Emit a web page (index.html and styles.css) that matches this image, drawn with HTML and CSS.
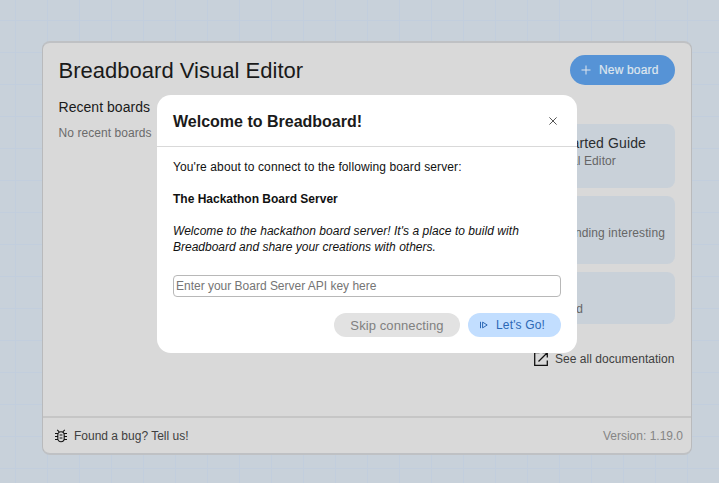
FILE: index.html
```html
<!DOCTYPE html>
<html lang="en">
<head>
<meta charset="utf-8">
<title>Breadboard Visual Editor</title>
<link rel="stylesheet" href="styles.css">
</head>
<body>
<main class="panel">
  <header class="top">
    <h1>Breadboard Visual Editor</h1>
    <button class="new"><svg width="10" height="10" viewBox="0 0 10 10"><path d="M5 .5v9M.5 5h9"/></svg><span>New board</span></button>
  </header>
  <div class="content">
    <section class="recent">
      <h2>Recent boards</h2>
      <p>No recent boards</p>
    </section>
    <section class="docs">
      <article class="card first"><h3>Getting Started Guide</h3><p>Visual Editor</p></article>
      <article class="card second"><p>finding interesting</p></article>
      <article class="card third"><p>board</p></article>
      <a class="all"><svg width="14" height="14" viewBox="0 0 14 14"><path d="M5.5 .7H.7v12.6h12.6V8.5M8.5 .7h4.8v4.8M13 1L4.5 9.5"/></svg><span>See all documentation</span></a>
    </section>
  </div>
  <footer class="foot">
    <a class="bug"><svg width="12" height="14" viewBox="0 0 12 14"><path d="M2.2 .8l2 2M9.8 .8l-2 2M0 4.5h3M9 4.5h3M0 7.5h3M9 7.5h3M0 10.5h3M9 10.5h3M4.6 6h2.8M4.6 9h2.8"/><rect x="2.8" y="2.7" width="6.4" height="10" rx="3.2"/></svg><span>Found a bug? Tell us!</span></a>
    <span class="version">Version: 1.19.0</span>
  </footer>
</main>
<div class="modal" role="dialog">
  <header class="modal-head">
    <h2>Welcome to Breadboard!</h2>
    <svg width="8" height="8" viewBox="0 0 8 8"><path d="M.4 .4l7.2 7.2M7.6 .4L.4 7.6"/></svg>
  </header>
  <div class="modal-body">
    <p class="intro">You're about to connect to the following board server:</p>
    <p class="name">The Hackathon Board Server</p>
    <p class="desc"><span class="l1">Welcome to the hackathon board server! It's a place to build with</span><br><span class="l2">Breadboard and share your creations with others.</span></p>
    <input type="text" placeholder="Enter your Board Server API key here">
    <div class="actions">
      <button class="skip"><span>Skip connecting</span></button>
      <button class="go"><svg width="8" height="8" viewBox="0 0 8 8"><path d="M.5 .8v6.4M2.6 1.1v5.8L7.2 4z"/></svg><span>Let's Go!</span></button>
    </div>
  </div>
</div>
</body>
</html>
```
FILE: styles.css
```css
* { box-sizing: border-box; }
body {
  margin: 0;
  height: 483px;
  overflow: hidden;
  padding: 41px 27px 0 42px;
  font: 12px/16px "Liberation Sans", Arial, sans-serif;
  background:
    linear-gradient(to right, #c2cedd 1px, transparent 1px) 15px 0 / 32px 32px,
    linear-gradient(#c2cedd 1px, transparent 1px) 0 20px / 32px 32px,
    #c8d1da;
}
h1, h2, h3, p { margin: 0; font-weight: 400; }
button { border: 0; padding: 0; font: inherit; display: flex; align-items: center; }
svg { display: block; flex: none; fill: none; stroke: currentColor; }
span { white-space: nowrap; }
.panel {
  width: 650px;
  height: 414px;
  border: 1px solid #b9babc;
  border-top: 2px solid #bfc1c4;
  border-bottom: 2px solid #bfc1c4;
  border-radius: 8px;
  background: #d9d9d9;
  display: flex;
  flex-direction: column;
}
.top { display: flex; justify-content: space-between; padding: 11.5px 16px 0 15.5px; height: 52px; }
h1 { font-size: 22px; line-height: 31px; color: #1a1a1a; letter-spacing: .02px; }
.new {
  width: 105px; height: 30px; border-radius: 15px;
  background: #5693d6; color: #dfe6ee; padding-left: 11px; gap: 8px;
}
.new span { letter-spacing: .16px; -webkit-text-stroke: .2px; }
.content { flex: 1; display: flex; justify-content: space-between; padding: 0 16px 0 15.5px; }
.recent h2 { font-size: 14px; line-height: 24px; color: #1a1a1a; letter-spacing: .04px; }
.recent p { margin-top: 6px; color: #6b6b6b; letter-spacing: .07px; }
.docs { width: 210px; padding-top: 29.4px; display: flex; flex-direction: column; gap: 8px; }
.card { background: #c9d1d9; border-radius: 8px; text-align: right; color: #666; letter-spacing: .12px; }
.first { height: 64px; padding: 10px 29px 0 0; }
.first h3 { font-size: 14px; line-height: 18px; color: #2a2d30; }
.first p { padding: 1px 30px 0 0; }
.second { height: 68px; padding: 28.6px 10px 0 0; }
.third { height: 52px; padding: 28.6px 92px 0 0; }
.all { display: flex; align-items: center; justify-content: flex-end; gap: 7px; margin: 18.6px .5px 0 0; color: #404040; letter-spacing: .04px; }
.all svg { color: #111; stroke-width: 1.3; }
.foot {
  height: 37px; border-top: 2px solid #c6c6c6;
  display: flex; align-items: center; justify-content: space-between; padding: 1px 8px 0 12px;
}
.bug { display: flex; align-items: center; gap: 7px; color: #404040; }
.bug svg { color: #111; stroke-width: 1.1; }
.version { color: #858585; }
.modal {
  position: absolute; left: 157px; top: 95px; width: 420px; height: 258px;
  border-radius: 14px; background: #fff; color: #111;
}
.modal-head {
  height: 52px; border-bottom: 1px solid #d9d9d9;
  display: flex; align-items: center; justify-content: space-between; padding: 2px 20px 0 16px;
}
.modal-head h2 { font-size: 16px; font-weight: 700; color: #1a1a1a; }
.modal-head svg { color: #555; margin-bottom: 2px; }
.modal-body { padding: 12px 16px 0; }
.intro { letter-spacing: .11px; }
.name { font-weight: 700; margin: 16px 0; }
.desc { font-style: italic; }
.l1 { letter-spacing: .045px; }
input {
  display: block; width: 388px; height: 22px; margin: 20px 0 16px; padding: 0 2px;
  border: 1px solid #b8b8b8; border-radius: 4px; font: inherit; letter-spacing: -.01px;
}
input::placeholder { color: #757575; opacity: 1; }
.actions { display: flex; justify-content: flex-end; gap: 8px; }
.skip { width: 126px; height: 24px; border-radius: 12px; background: #e2e2e2; color: #808080; justify-content: center; font-size: 13px; letter-spacing: .1px; padding-top: 1px; }
.go { width: 93px; height: 24px; border-radius: 12px; background: #c2deff; color: #2c68b5; padding-left: 12px; gap: 8px; letter-spacing: .15px; }
```
